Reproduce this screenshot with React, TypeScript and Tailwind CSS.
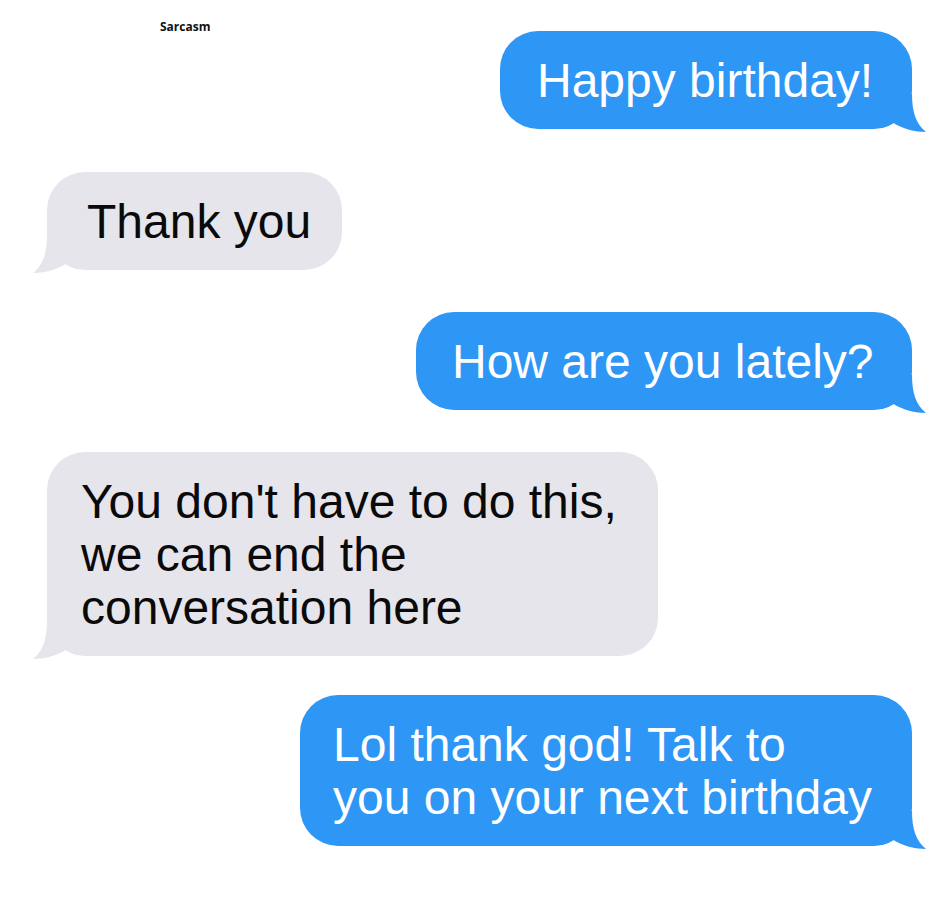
import React from "react";

const BLUE = "#2e96f4";
const GRAY = "#e5e5eb";

function Tail({ side, color }: { side: "left" | "right"; color: string }) {
  const cls =
    side === "right"
      ? "absolute right-[-14px] bottom-[-3px]"
      : "absolute left-[-14px] bottom-[-3px] -scale-x-100";
  return (
    <svg className={cls} width="46" height="38" viewBox="0 0 46 38">
      <path
        d="M0 0 H32 C32 18 36 30 46 38 C36 38 22 35 12 28 C8 32 4 34 0 34 Z"
        fill={color}
      />
    </svg>
  );
}

function Bubble({
  side,
  className,
  lines,
}: {
  side: "left" | "right";
  className: string;
  lines: string[];
}) {
  const blue = side === "right";
  return (
    <div
      className={`relative rounded-[38px] py-[22.5px] text-[48px] leading-[53px] whitespace-nowrap ${
        blue ? "bg-[#2e96f4] text-white" : "bg-[#e5e5eb] text-[#0a0a0a]"
      } ${className}`}
    >
      <Tail side={side} color={blue ? BLUE : GRAY} />
      <div className="relative">
        {lines.map((l, i) => (
          <div key={i}>{l}</div>
        ))}
      </div>
    </div>
  );
}

export default function App() {
  return (
    <div
      className="w-[941px] h-[902px] bg-white pt-[19px] pl-[47px] pr-[29px] flex flex-col"
      style={{ fontFamily: '"Liberation Sans", Arial, Helvetica, sans-serif' }}
    >
      <div className="flex justify-between items-start">
        <div
          className="ml-[113px] text-[12px] leading-[16px] font-bold text-[#111]"
          style={{ fontFamily: '"Open Sans", "Liberation Sans", sans-serif' }}
        >
          Sarcasm
        </div>
        <Bubble side="right" className="mt-[12px] w-[412px] pl-[37px]" lines={["Happy birthday!"]} />
      </div>
      <div className="mt-[43px] flex justify-start">
        <Bubble side="left" className="w-[295px] pl-[40px]" lines={["Thank you"]} />
      </div>
      <div className="mt-[42px] flex justify-end">
        <Bubble side="right" className="w-[496px] pl-[36px]" lines={["How are you lately?"]} />
      </div>
      <div className="mt-[42px] flex justify-start">
        <Bubble
          side="left"
          className="w-[611px] pl-[34px]"
          lines={["You don't have to do this,", "we can end the", "conversation here"]}
        />
      </div>
      <div className="mt-[39px] flex justify-end">
        <Bubble
          side="right"
          className="w-[612px] pl-[33px]"
          lines={["Lol thank god! Talk to", "you on your next birthday"]}
        />
      </div>
    </div>
  );
}
